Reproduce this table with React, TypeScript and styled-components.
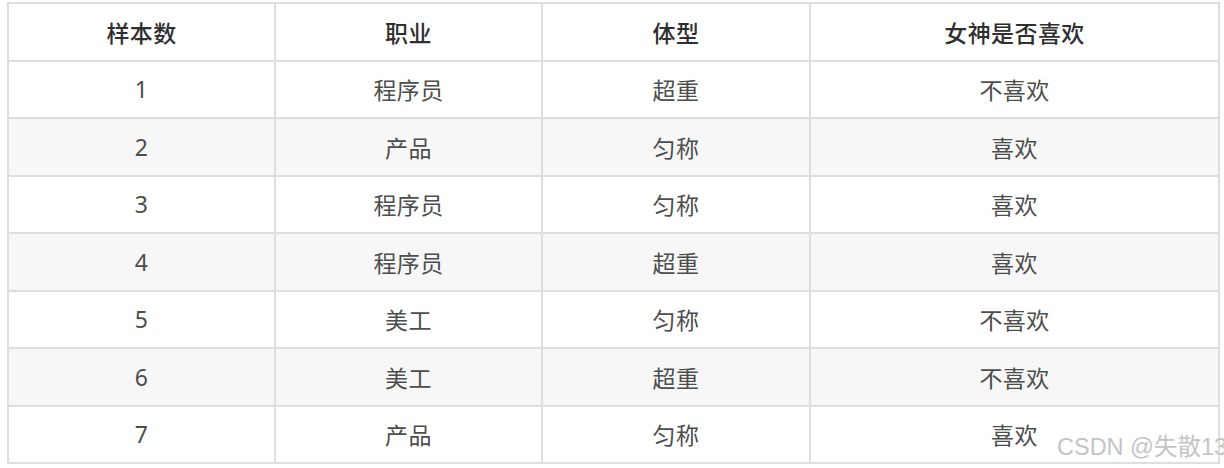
import React from "react";
import styled, { createGlobalStyle } from "styled-components";

const GlobalStyle = createGlobalStyle`
  html, body {
    margin: 0;
    padding: 0;
    background: #ffffff;
    overflow: hidden;
  }
  body {
    font-family: "Noto Sans", "Noto Sans CJK SC", sans-serif;
  }
`;

const Page = styled.div`
  position: relative;
  width: 1224px;
  height: 468px;
  padding: 2px 0 0 7px;
  box-sizing: border-box;
`;

const Table = styled.table`
  border-collapse: collapse;
  table-layout: fixed;
  width: 1211px;
  font-size: 23px;
  color: #4d4d4d;
`;

const Cell = styled.td<{ $head?: boolean }>`
  border: 2px solid #dedede;
  text-align: center;
  vertical-align: middle;
  padding: 0;
  letter-spacing: 0.4px;
  font-weight: ${({ $head }) => ($head ? 500 : 400)};
  color: ${({ $head }) => ($head ? "#2f2f2f" : "#4d4d4d")};
`;

const Row = styled.tr<{ $striped?: boolean }>`
  height: 57.5px;
  background: ${({ $striped }) => ($striped ? "#f7f7f7" : "#ffffff")};
`;

const Watermark = styled.div`
  position: absolute;
  left: 1057px;
  top: 432px;
  font-family: "Liberation Sans", "Noto Sans CJK SC", sans-serif;
  font-size: 23.5px;
  line-height: 30px;
  white-space: nowrap;
  color: #c4c4c4;
  text-shadow: 0 0 1px #ffffff;
`;

const columns = [267, 267, 268, 409];
const headers = ["样本数", "职业", "体型", "女神是否喜欢"];

const rows = [
  ["1", "程序员", "超重", "不喜欢"],
  ["2", "产品", "匀称", "喜欢"],
  ["3", "程序员", "匀称", "喜欢"],
  ["4", "程序员", "超重", "喜欢"],
  ["5", "美工", "匀称", "不喜欢"],
  ["6", "美工", "超重", "不喜欢"],
  ["7", "产品", "匀称", "喜欢"],
];

export default function App() {
  return (
    <>
      <GlobalStyle />
      <Page>
        <Table>
          <colgroup>
            {columns.map((w, i) => (
              <col key={i} style={{ width: w }} />
            ))}
          </colgroup>
          <thead>
            <Row>
              {headers.map((h) => (
                <Cell as="th" $head key={h}>
                  {h}
                </Cell>
              ))}
            </Row>
          </thead>
          <tbody>
            {rows.map((r, idx) => (
              <Row key={r[0]} $striped={idx % 2 === 1}>
                {r.map((c, j) => (
                  <Cell key={j}>{c}</Cell>
                ))}
              </Row>
            ))}
          </tbody>
        </Table>
        <Watermark>CSDN @失散13</Watermark>
      </Page>
    </>
  );
}
